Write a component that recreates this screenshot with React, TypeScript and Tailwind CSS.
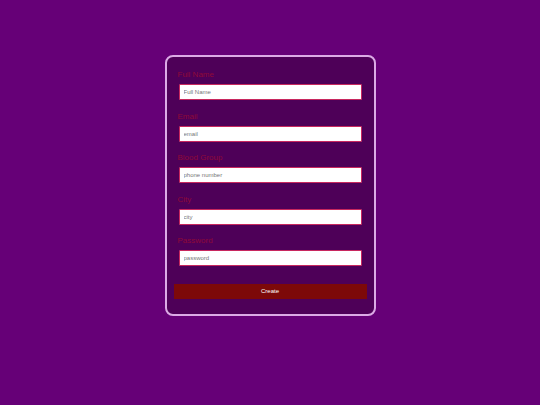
import React from "react";

const fields = [
  { label: "Full Name", ph: "Full Name", type: "text" },
  { label: "Email", ph: "email", type: "email" },
  { label: "Blood Group", ph: "phone number", type: "text" },
  { label: "City", ph: "city", type: "text" },
  { label: "Password", ph: "password", type: "password" },
];

export default function App() {
  return (
    <div
      className="w-full min-h-[405px] bg-[#660077] flex justify-center pt-[55px]"
      style={{ fontFamily: '"Liberation Sans", Arial, sans-serif' }}
    >
      <form
        className="w-[211px] h-[261px] border-2 border-[#dcaae6] rounded-[8px] bg-[#4e0058] pt-[13px] px-[7px] flex flex-col"
        onSubmit={(e) => e.preventDefault()}
      >
        <div className="px-[5px]">
          {fields.map((f) => (
            <div key={f.label} className="mb-[11.5px]">
              <label className="block text-[8px] leading-[9px] text-[#8e0a38] mb-[5px] ml-[-1px]">
                {f.label}
              </label>
              <input
                type={f.type}
                placeholder={f.ph}
                className="block w-full h-[16px] bg-white border border-[#c8285e] rounded-[1px] px-[4px] text-[6px] text-gray-700 placeholder:text-[#777] outline-none"
              />
            </div>
          ))}
        </div>
        <button
          type="submit"
          className="mt-[6px] h-[15px] w-full bg-[#7d0909] text-white text-[6px] leading-[15px]"
        >
          Create
        </button>
      </form>
    </div>
  );
}
